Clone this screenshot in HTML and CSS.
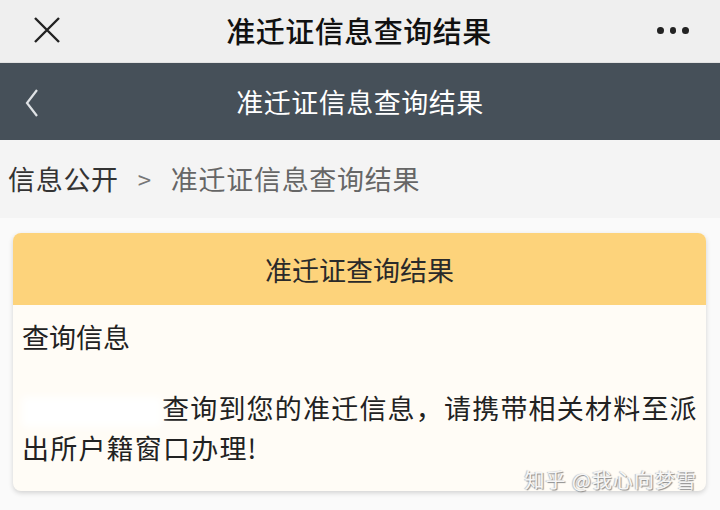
FILE: index.html
```html
<!DOCTYPE html>
<html>
    <head>
        <title>准迁证信息查询结果</title>
        <meta name="viewport" content="width=device-width, initial-scale=1">
        <link rel="stylesheet" href="styles.css">
    </head>
    <body>
        <!-- WeChat style title bar -->
        <div class="topbar">
            <span class="close">
                <svg width="28" height="28" viewBox="0 0 28 28"><path d="M2 2 L26 26 M26 2 L2 26" stroke="#222" stroke-width="2.4" fill="none"/></svg>
            </span>
            <span class="toptitle">准迁证信息查询结果</span>
            <span class="dots"><i></i><i></i><i></i></span>
        </div>

        <!-- page nav -->
        <div class="navbar">
            <span class="back">
                <svg width="14" height="28" viewBox="0 0 14 28"><path d="M12 1 L2 14 L12 27" stroke="#dfe2e5" stroke-width="2.2" fill="none"/></svg>
            </span>
            <span class="navtitle">准迁证信息查询结果</span>
        </div>

        <div class="crumbs">
            <span class="crumb-first">信息公开</span>
            <span class="crumb-sep">&gt;</span>
            <span class="crumb-last">准迁证信息查询结果</span>
        </div>

        <div class="main">
            <div class="card">
                <div class="card-head">准迁证查询结果</div>
                <div class="card-body">
                    <p class="label">查询信息</p>
                    <p class="result"><span class="hidden-name"></span>查询到您的准迁信息，请携带相关材料至派出所户籍窗口办理!</p>
                </div>
                <div class="watermark">知乎 @我心向梦雪</div>
            </div>
        </div>
    </body>
</html>
```
FILE: styles.css
```css
* {
    box-sizing: border-box;
}
body {
    margin: 0;
    font-family: "Noto Sans CJK SC", "Noto Sans", sans-serif;
    background-color: #fafafa;
    color: #222;
}
.topbar {
    height: 63px;
    background-color: #efefef;
    display: flex;
    align-items: center;
    justify-content: space-between;
    padding: 0 31px 2px 33px;
    border-bottom: 1px solid #e2e2e2;
}
.close {
    width: 28px;
    height: 28px;
    display: flex;
}
.toptitle {
    font-size: 29px;
    font-weight: 500;
    color: #111;
    letter-spacing: 0.5px;
}
.dots {
    display: flex;
    gap: 6px;
    width: 32px;
}
.dots i {
    width: 7px;
    height: 7px;
    border-radius: 50%;
    background-color: #222;
}
.navbar {
    height: 77px;
    background-color: #465059;
    display: flex;
    align-items: center;
    justify-content: center;
    position: relative;
}
.back {
    position: absolute;
    left: 25px;
    top: 26px;
    display: flex;
}
.navtitle {
    color: #fff;
    font-size: 27px;
    letter-spacing: 0.5px;
}
.crumbs {
    height: 78px;
    background-color: #f4f4f4;
    display: flex;
    align-items: center;
    padding: 0 0 2px 8px;
    font-size: 27px;
    letter-spacing: 0.7px;
}
.crumb-first {
    color: #333;
}
.crumb-sep {
    color: #777;
    font-size: 24px;
    margin: 0 19px 0 19px;
}
.crumb-last {
    color: #666;
}
.main {
    padding: 15px 12px 20px 13px;
}
.card {
    position: relative;
    border-radius: 8px;
    background-color: #fffcf6;
    box-shadow: 0 2px 5px rgba(0, 0, 0, 0.16);
    width: 693px;
}
.card-head {
    height: 72px;
    border-radius: 8px 8px 0 0;
    background-color: #fdd37b;
    display: flex;
    align-items: center;
    justify-content: center;
    font-size: 27px;
    color: #2a2a2a;
}
.card-body {
    padding: 12px 0 23px 9px;
    font-size: 27px;
    line-height: 40px;
}
.card-body p {
    margin: 0;
}
.label {
    margin-bottom: 31px !important;
}
.result {
    letter-spacing: 1.2px;
}
.hidden-name {
    display: inline-block;
    width: 140px;
    height: 30px;
    vertical-align: middle;
    background-color: #fff;
    filter: blur(4px);
}
.watermark {
    position: absolute;
    right: 9px;
    bottom: 0;
    font-size: 20px;
    line-height: 22px;
    letter-spacing: 1px;
    color: #f6f6f6;
    text-shadow: 1px 1px 1px #8a8a8a, -1px 0 1px #bdbdbd;
}
```
